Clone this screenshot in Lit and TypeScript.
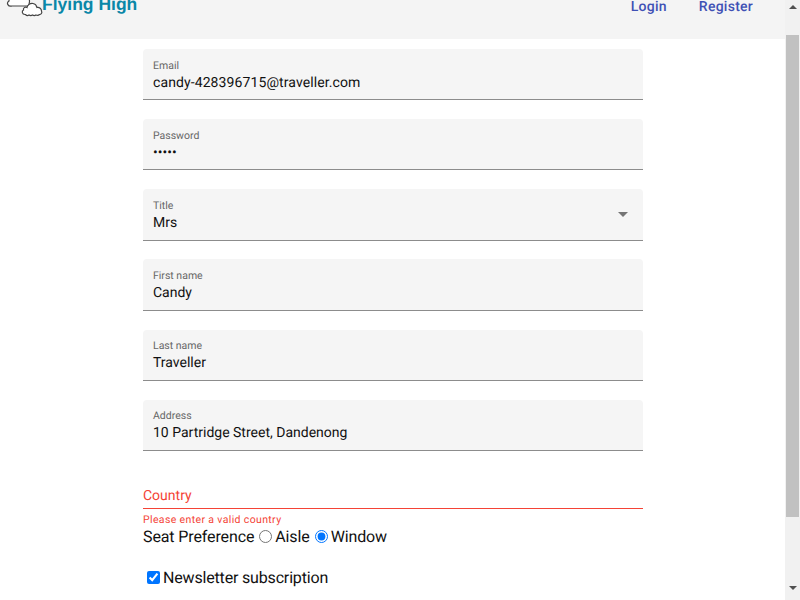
import { LitElement, html, css, svg } from 'lit';
import { customElement } from 'lit/decorators.js';

type Field = { label: string; value: string; select?: boolean; tall?: boolean; wide?: boolean };

const FIELDS: Field[] = [
  { label: 'Email', value: 'candy-428396715@traveller.com', wide: true },
  { label: 'Password', value: '•••••' },
  { label: 'Title', value: 'Mrs', select: true, tall: true },
  { label: 'First name', value: 'Candy', tall: true },
  { label: 'Last name', value: 'Traveller' },
  { label: 'Address', value: '10 Partridge Street, Dandenong' },
];

const cloud = (d: string) => svg`<path d=${d} fill="#fff" stroke="#444" stroke-width="1.2" />`;

@customElement('app-root')
export class AppRoot extends LitElement {
  static styles = css`
    :host {
      display: flex;
      width: 800px;
      height: 600px;
      overflow: hidden;
      font-family: Roboto, 'Liberation Sans', sans-serif;
      text-rendering: geometricPrecision;
      background: #fff;
    }

    .page {
      flex: 1;
      min-width: 0;
      display: flex;
      flex-direction: column;
    }

    .header {
      height: 39px;
      flex: none;
      background: #f4f4f4;
      display: flex;
      justify-content: space-between;
      overflow: hidden;
    }

    .brand {
      display: flex;
      height: 27px;
      margin-top: -9px;
      padding-left: 6px;
    }

    .brand svg {
      width: 38px;
      height: 27px;
      flex: none;
    }

    .brand span {
      margin: 3px 0 0 -2px;
      font: bold 17.5px/21px 'Liberation Sans', sans-serif;
      color: #0a87a8;
    }

    .nav {
      display: flex;
      gap: 32px;
      height: 15px;
      padding-right: 32px;
    }

    .nav a {
      font-size: 14px;
      font-weight: 500;
      line-height: 15px;
      letter-spacing: 0.25px;
      color: #3f51b5;
    }

    .form {
      width: 500px;
      margin: 10px 0 0 143px;
      display: flex;
      flex-direction: column;
    }

    .field {
      box-sizing: border-box;
      height: 51px;
      margin-bottom: 19px;
      background: #f5f5f5;
      border-radius: 4px 4px 0 0;
      border-bottom: 1px solid #8c8c8c;
      padding: 0 10px;
      display: flex;
      align-items: center;
      justify-content: space-between;
    }

    .field.select {
      margin-bottom: 18px;
    }

    .field.tall {
      height: 52px;
    }

    .field .label {
      font-size: 10.5px;
      line-height: 12px;
      margin-top: 11px;
      color: #666;
    }

    .field:nth-child(n + 5) .label {
      margin-top: 10px;
    }

    .field .value {
      font-size: 14px;
      line-height: 18px;
      margin-top: 2px;
      color: #111;
    }

    .field .value.wide {
      letter-spacing: 0.1px;
    }

    .field > div {
      align-self: flex-start;
    }

    .arrow {
      width: 0;
      height: 0;
      margin-right: 5px;
      border-left: 5px solid transparent;
      border-right: 5px solid transparent;
      border-top: 5px solid #757575;
    }

    .country {
      box-sizing: border-box;
      height: 39px;
      border-bottom: 1px solid #f44336;
      display: flex;
      align-items: flex-end;
    }

    .country span {
      font-size: 14px;
      line-height: 18px;
      margin-bottom: 3px;
      color: #f44336;
    }

    .error {
      font-size: 10.5px;
      line-height: 12px;
      margin-top: 5px;
      letter-spacing: 0.36px;
      color: #f44336;
    }

    .seat {
      display: flex;
      align-items: center;
      height: 19px;
      margin-top: 1px;
      font-size: 16px;
      letter-spacing: -0.12px;
      color: #111;
    }

    input {
      margin: 0 3px 0 4px;
      width: 13px;
      height: 13px;
    }

    .seat input {
      margin-left: 5px;
    }

    .check {
      display: flex;
      align-items: center;
      height: 19px;
      margin-top: 22px;
      font-size: 16px;
      letter-spacing: -0.17px;
      color: #111;
    }

    .scrollbar {
      width: 15px;
      flex: none;
      background: #f1f1f1;
      display: flex;
      flex-direction: column;
      align-items: center;
    }

    .scrollbar .up,
    .scrollbar .down {
      width: 0;
      height: 0;
      border-left: 4px solid transparent;
      border-right: 4px solid transparent;
    }

    .scrollbar .up {
      margin-top: 5px;
      border-bottom: 4px solid #505050;
    }

    .scrollbar .thumb {
      width: 13px;
      height: 482px;
      margin-top: 26px;
      background: #c1c1c1;
    }

    .scrollbar .down {
      margin-top: 69px;
      border-top: 4px solid #505050;
    }
  `;

  private renderField(f: Field) {
    return html`
      <div class="field ${f.tall ? 'tall' : ''} ${f.select ? 'select' : ''}">
        <div>
          <div class="label">${f.label}</div>
          <div class="value ${f.wide ? 'wide' : ''}">${f.value}</div>
        </div>
        ${f.select ? html`<span class="arrow"></span>` : ''}
      </div>
    `;
  }

  render() {
    return html`
      <div class="page">
        <div class="header">
          <div class="brand">
            <svg viewBox="0 0 38 27">
              ${cloud('M6 15c-4 1-6-3-3-5 0-3 2-5 5-5 3-4 10-4 12 0 3 0 5 6 2 10z')}
              ${cloud('M19 23.500c-3 0-3.500-3.500-1.500-4.500-.5-2 1.500-3.500 3.500-2.500 .5-2.500 3-4.500 6-4 2 .3 3.500 2 4 4 2.500-.5 4.500 1.500 4.500 3.500 1 2-.5 3.500-2 3.500-1 1-2.500 1-3.500 .5-1 .7-2.500 .7-3.500 0-1 .7-2.500 .7-3.500 0-1 .7-2.500 .7-3.500-.5z')}
            </svg>
            <span>Flying High</span>
          </div>
          <div class="nav">
            <a>Login</a>
            <a>Register</a>
          </div>
        </div>
        <div class="form">
          ${FIELDS.map((f) => this.renderField(f))}
          <div class="country"><span>Country</span></div>
          <div class="error">Please enter a valid country</div>
          <div class="seat">
            Seat Preference
            <input type="radio" name="seat" />Aisle
            <input type="radio" name="seat" checked />Window
          </div>
          <div class="check">
            <input type="checkbox" checked />Newsletter subscription
          </div>
        </div>
      </div>
      <div class="scrollbar">
        <span class="up"></span>
        <span class="thumb"></span>
        <span class="down"></span>
      </div>
    `;
  }
}
